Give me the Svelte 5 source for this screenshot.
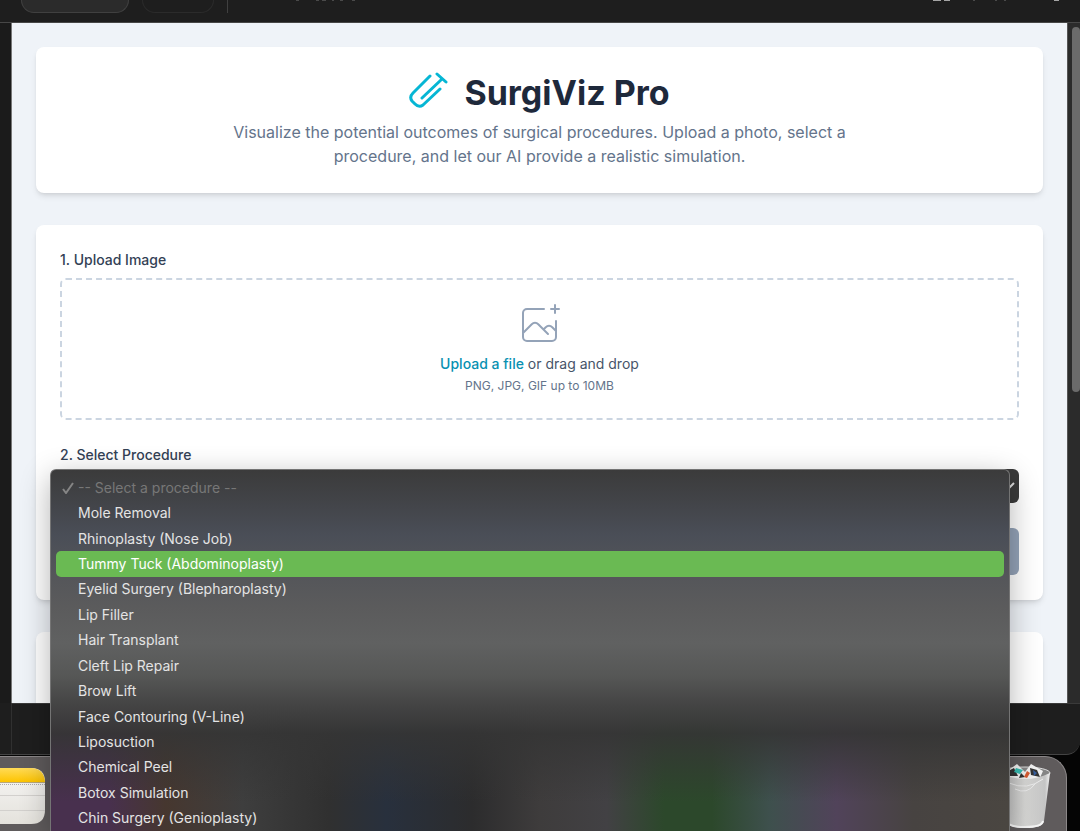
<script lang="ts">
	const procedures = [
		'-- Select a procedure --',
		'Mole Removal',
		'Rhinoplasty (Nose Job)',
		'Tummy Tuck (Abdominoplasty)',
		'Eyelid Surgery (Blepharoplasty)',
		'Lip Filler',
		'Hair Transplant',
		'Cleft Lip Repair',
		'Brow Lift',
		'Face Contouring (V-Line)',
		'Liposuction',
		'Chemical Peel',
		'Botox Simulation',
		'Chin Surgery (Genioplasty)'
	];

	let selected = 0;
	let highlighted = 3;
</script>

<div class="desktop">
	<div class="window">
		<div class="toolbar">
			<div class="pill active"></div>
			<div class="pill"></div>
			<div class="divider"></div>
			<svg class="specks left" width="130" height="2" viewBox="0 0 130 2" aria-hidden="true">
				<path d="M56 0h3M76 0h3M82 0h4M92 0h2M100 0h3M112 0h3" />
			</svg>
			<svg class="specks right" width="130" height="2" viewBox="0 0 130 2" aria-hidden="true">
				<path class="bright" d="M0 0h8M11 0h6M121 0h5" />
				<path d="M40 0h2M62 0h2M71 0h2" />
			</svg>
		</div>
		<div class="middle">
			<div class="gutter"></div>
			<div class="viewport">
				<header class="card">
					<h1>
						<svg width="39" height="42" viewBox="0 0 39 42" aria-hidden="true">
							<path d="M21 4 4 21q-4 4-1 8l3 3q4 4 8 1L31 17M13 26 33 7M28 2l9 8" />
						</svg>
						SurgiViz Pro
					</h1>
					<p>
						Visualize the potential outcomes of surgical procedures. Upload a photo, select a
						procedure, and let our AI provide a realistic simulation.
					</p>
				</header>

				<form class="card form" on:submit|preventDefault>
					<div class="field">
						<label for="image">1. Upload Image</label>
						<div class="dropzone">
							<svg width="48" height="48" viewBox="0 0 48 48" aria-hidden="true">
								<path
									d="M28 8H11a4 4 0 0 0-4 4v24a4 4 0 0 0 4 4h25a4 4 0 0 0 4-4V20M7 32l9-9a4 4 0 0 1 6 0l10 10M28 28l2-2a4 4 0 0 1 6 0l4 4M35 8h8M39 4v8"
								/>
							</svg>
							<div class="hint">
								<label class="pick" for="image">Upload a file</label> or drag and drop
								<input id="image" type="file" accept="image/*" />
							</div>
							<small>PNG, JPG, GIF up to 10MB</small>
						</div>
					</div>
					<div class="field tight">
						<label for="procedure">2. Select Procedure</label>
						<div class="select">
							<select id="procedure" bind:value={selected}>
								{#each procedures as name, index}
									<option value={index}>{name}</option>
								{/each}
							</select>
							<svg width="12" height="10" viewBox="0 0 12 10" aria-hidden="true">
								<path d="M1 2l5 5 5-5" />
							</svg>
						</div>
					</div>
					<button class="submit" aria-label="Generate simulation" disabled></button>
				</form>

				<section class="card result"></section>
			</div>
			<div class="scrollbar"><div class="thumb"></div></div>
		</div>
		<div class="bottom"></div>
	</div>

	<div class="dock">
		<svg class="notes" width="45" height="58" viewBox="0 0 45 58" aria-hidden="true">
			<defs>
				<linearGradient id="paper" x2="0" y2="1">
					<stop offset="0" stop-color="#f7f6f5" />
					<stop offset="1" stop-color="#e4e2dc" />
				</linearGradient>
				<linearGradient id="yellow" x2="0" y2="1">
					<stop offset="0" stop-color="#ffdb57" />
					<stop offset="1" stop-color="#fdc400" />
				</linearGradient>
			</defs>
			<path fill="url(#paper)" d="M0 1h31q14 0 14 14v28q0 14-14 14H0z" />
			<path fill="url(#yellow)" d="M0 1h31q13 0 14 14H0z" />
			<path stroke="#b8a77a" d="M0 15.500h45" />
			<path stroke="#aaa" stroke-dasharray="1 1" d="M0 17.500h45" />
			<path stroke="#d2d0cd" d="M0 28.500h45M0 43.500h45" />
		</svg>
		<svg class="trash" width="52" height="66" viewBox="0 0 52 66" aria-hidden="true">
			<defs>
				<linearGradient id="bin">
					<stop offset="0" stop-color="#bdbdbd" />
					<stop offset="0.5" stop-color="#d8d8d6" />
					<stop offset="0.900" stop-color="#c4c4c4" />
					<stop offset="1" stop-color="#f2f2f2" />
				</linearGradient>
			</defs>
			<ellipse cx="26" cy="10" rx="25" ry="6" fill="#858585" stroke="#ddd" />
			<path fill="#f1f1f1" d="M7 9l11-8 8 8 6-8 12 7-4 9H8z" />
			<path fill="#333" d="M9 8l6-3 4 8H10zM31 5l7 2 3 7-9-2zM22 10l4 4-6 1z" />
			<path fill="#36bcb1" d="M17 5l7 2-3 4-6-2z" />
			<path fill="#d65b31" d="M28 8l3 2-3 5-3-1z" />
			<path fill="#365f9d" d="M34 7l4 3-3 3z" />
			<path
				fill="url(#bin)"
				d="M1 10q25 12 50 0l-6 48q-1 7-19 7T7 58z"
			/>
			<path fill="none" stroke="#ececec" d="M10 20q18 8 34-4M16 26q12 6 20-5" />
			<path fill="none" stroke="#f5f5f5" stroke-width="2" d="M8 58q1 6 18 6t18-6" />
		</svg>
	</div>

	<ul class="menu" role="listbox" aria-label="Select Procedure">
		{#each procedures as name, index}
			<li
				role="option"
				aria-selected={index == selected}
				class:placeholder={index == 0}
				class:highlighted={index == highlighted}
				on:mouseenter={() => {
					highlighted = index;
				}}
			>
				{#if index == selected}
					<svg width="12" height="12" viewBox="0 0 12 12" aria-hidden="true">
						<path d="M1 7l3 4 7-10" />
					</svg>
				{/if}
				<span>{name}</span>
			</li>
		{/each}
	</ul>
</div>

<style>
	:global(body) {
		margin: 0;
		background: #050505;
	}
	.desktop {
		position: relative;
		display: flex;
		flex-direction: column;
		height: 100vh;
		overflow: hidden;
		font-family: Inter, 'Liberation Sans', sans-serif;
		font-size: 14px;
		line-height: 20px;
		color: #334155;
		background: #050505;
	}
	.desktop * {
		box-sizing: border-box;
	}
	svg {
		fill: none;
		flex-shrink: 0;
	}

	.window {
		flex: 1;
		min-height: 0;
		display: flex;
		flex-direction: column;
		background: #1e1e1e;
		border-bottom: 1px solid #444;
		border-bottom-right-radius: 14px;
		overflow: hidden;
	}
	.toolbar {
		display: flex;
		height: 23px;
		padding-left: 21px;
		border-bottom: 1px solid #474747;
		flex-shrink: 0;
	}
	.pill {
		width: 72px;
		height: 13px;
		margin-right: 13px;
		border: 1px solid #2b2b2b;
		border-top: none;
		border-radius: 0 0 13px 13px;
	}
	.pill.active {
		width: 108px;
		background: #2b2b2b;
		border-color: #404040;
	}
	.divider {
		width: 1px;
		height: 13px;
		background: #404040;
	}
	.specks {
		stroke: #4a4a4a;
		stroke-width: 2;
	}
	.specks.left {
		margin-left: 12px;
	}
	.specks.right {
		margin-left: auto;
		margin-right: 17px;
	}
	.bright {
		stroke: #a5a5a5;
	}

	.middle {
		flex: 1;
		min-height: 0;
		display: flex;
	}
	.gutter {
		width: 12px;
		border-right: 1px solid #777;
		background: #1b1b1b;
		flex-shrink: 0;
	}
	.viewport {
		flex: 1;
		min-width: 0;
		overflow: hidden;
		display: flex;
		flex-direction: column;
		gap: 32px;
		padding: 24px 24px 0;
		background: #eff3f8;
	}
	.scrollbar {
		width: 13px;
		padding: 4px 0 0 4px;
		border-left: 1px solid #555;
		background: #2b2b2b;
		flex-shrink: 0;
	}
	.thumb {
		height: 54%;
		border-radius: 5px;
		background: #6b6b6b;
	}
	.bottom {
		height: 51px;
		margin-left: 11px;
		border-left: 1px solid #303030;
		border-top: 1px solid #3a3a3a;
		flex-shrink: 0;
	}

	.card {
		flex-shrink: 0;
		padding: 25px 24px;
		border-radius: 8px;
		background: #fff;
		box-shadow:
			0 4px 6px -1px rgba(0, 0, 0, 0.1),
			0 2px 4px -2px rgba(0, 0, 0, 0.1);
	}
	header.card {
		padding: 24px 24px 25px;
		text-align: center;
	}
	h1 {
		display: flex;
		align-items: center;
		justify-content: center;
		gap: 16px;
		margin: 0 0 5px;
		font-size: 34px;
		line-height: 44px;
		font-weight: 700;
		color: #1e293b;
	}
	h1 svg {
		stroke: #06b6d4;
		stroke-width: 3;
		stroke-linecap: round;
		stroke-linejoin: round;
	}
	p {
		max-width: 672px;
		margin: 0 auto;
		font-size: 16px;
		line-height: 24px;
		color: #64748b;
	}

	.form {
		display: flex;
		flex-direction: column;
		gap: 25px;
	}
	.field {
		display: flex;
		flex-direction: column;
		gap: 8px;
	}
	.tight {
		gap: 4px;
	}
	label {
		font-weight: 500;
	}
	.dropzone {
		display: flex;
		flex-direction: column;
		align-items: center;
		padding: 21px 24px;
		border: 2px dashed #cbd5e1;
		border-radius: 6px;
	}
	.dropzone svg {
		margin-bottom: 4px;
		stroke: #94a3b8;
		stroke-width: 2;
		stroke-linecap: round;
		stroke-linejoin: round;
	}
	.hint {
		position: relative;
		line-height: 22px;
		color: #475569;
	}
	.pick {
		color: #0891b2;
		cursor: pointer;
	}
	.hint input {
		position: absolute;
		width: 1px;
		height: 1px;
		opacity: 0;
	}
	small {
		font-size: 12px;
		line-height: 22px;
		color: #64748b;
	}
	.select {
		display: flex;
		align-items: center;
		height: 34px;
		padding-right: 4px;
		border-radius: 6px;
		background: #3b3b3b;
	}
	select {
		flex: 1;
		height: 34px;
		padding: 0 12px;
		border: none;
		appearance: none;
		background: transparent;
		color: #fff;
		font: inherit;
	}
	.select svg {
		stroke: #ddd;
		stroke-width: 2;
	}
	.submit {
		height: 47px;
		border: none;
		border-radius: 6px;
		background: #94a3b8;
	}
	.result {
		height: 320px;
	}

	.dock {
		display: flex;
		justify-content: space-between;
		align-items: flex-start;
		height: 75px;
		margin: 1px 13px 0 0;
		padding: 6px 15px 0 0;
		border-top: 1px solid #8b8788;
		border-right: 1px solid #8b8788;
		border-top-right-radius: 22px;
		background: #5f5b5c;
		flex-shrink: 0;
	}
	.notes {
		margin-top: 4px;
	}

	.menu {
		position: absolute;
		top: 469px;
		right: 70px;
		bottom: 0;
		left: 50px;
		display: grid;
		grid-auto-rows: 1fr;
		margin: 0;
		padding: 5px 5px 0;
		list-style: none;
		border: 1px solid #747474;
		border-bottom: none;
		border-radius: 6px 6px 0 0;
		color: #e4e4e4;
		background:
			linear-gradient(#3b3b3b, #43454a 10%, #4a4e57 18%, #525459 26%, #5b5b5c 38%, #606161 48%, #565756 57%, #444 65%, rgba(53, 53, 53, 0.9) 73%, rgba(53, 53, 53, 0) 92%),
			linear-gradient(
				90deg,
				#48304e,
				#48304e 6%,
				#46372f 12%,
				#3e3e3e 20%,
				#303030 29%,
				#28303d 35%,
				#2c2c2d 44%,
				#3e3c3c 51%,
				#424144 58%,
				#2c482b 64%,
				#2c482b 69%,
				#3e504d 75%,
				#51435a 82%,
				#474341 90%,
				#4a4641
			);
		box-shadow: 0 8px 30px rgba(0, 0, 0, 0.3);
	}
	li {
		display: grid;
		grid-template-columns: 22px 1fr;
		align-items: center;
		border-radius: 5px;
	}
	li span {
		grid-column: 2;
	}
	li svg {
		margin-left: 6px;
		stroke: #858585;
		stroke-width: 2;
		grid-row: 1;
	}
	.placeholder {
		color: #777;
	}
	.highlighted {
		color: #fff;
		background: #6aba53;
	}
</style>
